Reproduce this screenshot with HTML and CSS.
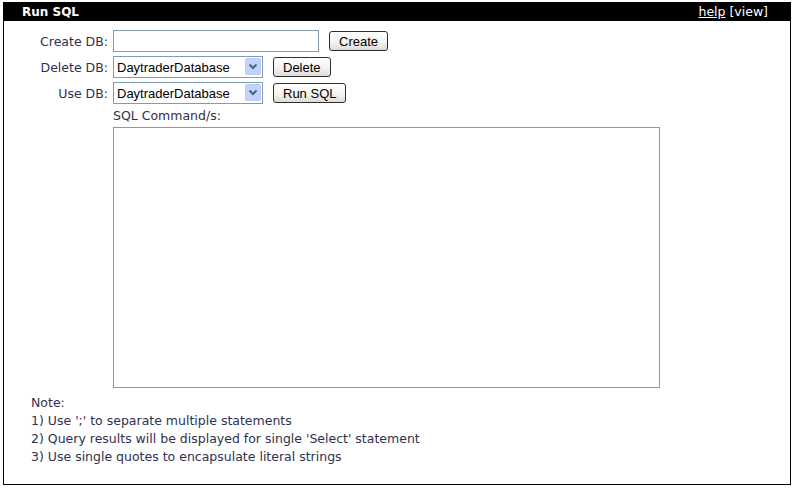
FILE: index.html
```html
<!DOCTYPE html>
<html>
<head>
<meta charset="utf-8">
<link rel="stylesheet" href="styles.css">
</head>
<body>
<div class="panel">
  <div class="titlebar">
    <span class="title">Run SQL</span>
    <span class="links"><a href="#" class="help">help</a> [view]</span>
  </div>
  <div class="content">
    <div class="form">
      <label class="lbl">Create DB:</label>
      <div class="row">
        <input type="text" class="txt">
        <button class="btn">Create</button>
      </div>
      <label class="lbl">Delete DB:</label>
      <div class="row">
        <span class="selwrap">
          <select class="sel"><option>DaytraderDatabase</option></select>
          <svg class="arrow" width="16" height="17" viewBox="0 0 16 17"><rect x="0.5" y="0.5" width="15" height="16" rx="1" fill="#c1d3fb" stroke="#b9cdf7"/><path d="M4.5 6.5 L8 10 L11.5 6.5" fill="none" stroke="#4d6185" stroke-width="2"/></svg>
        </span>
        <button class="btn">Delete</button>
      </div>
      <label class="lbl">Use DB:</label>
      <div class="row">
        <span class="selwrap">
          <select class="sel"><option>DaytraderDatabase</option></select>
          <svg class="arrow" width="16" height="17" viewBox="0 0 16 17"><rect x="0.5" y="0.5" width="15" height="16" rx="1" fill="#c1d3fb" stroke="#b9cdf7"/><path d="M4.5 6.5 L8 10 L11.5 6.5" fill="none" stroke="#4d6185" stroke-width="2"/></svg>
        </span>
        <button class="btn">Run SQL</button>
      </div>
      <span></span>
      <div class="cmd">
        <div class="cmdlbl">SQL Command/s:</div>
        <textarea class="area"></textarea>
      </div>
    </div>
    <div class="note">
      <div>Note:</div>
      <div>1) Use ';' to separate multiple statements</div>
      <div>2) Query results will be displayed for single 'Select' statement</div>
      <div>3) Use single quotes to encapsulate literal strings</div>
    </div>
  </div>
</div>
</body>
</html>
```

FILE: styles.css
```css
html, body {
  margin: 0;
  padding: 0;
  background: #fff;
}
body {
  font-family: "DejaVu Sans", Verdana, sans-serif;
  font-size: 11px;
  color: #30304f;
}
.panel {
  margin: 2px 2px 0 3px;
  width: 786px;
  height: 482px;
  border: 1px solid #000;
  border-top: none;
  display: flex;
  flex-direction: column;
}
.titlebar {
  background: #000;
  color: #fff;
  height: 19px;
  display: flex;
  align-items: center;
  justify-content: space-between;
  padding: 0 22px 0 18px;
  font-size: 12.5px;
}
.title {
  font-weight: bold;
  font-size: 12px;
}
.links {
  color: #fff;
}
.links a {
  color: #fff;
  text-decoration: underline;
}
.content {
  padding: 9px 0 0 26px;
}
.form {
  display: grid;
  grid-template-columns: 78px auto;
  column-gap: 5px;
  row-gap: 4px;
  align-items: center;
}
.lbl {
  text-align: right;
  font-size: 12.5px;
  white-space: nowrap;
}
.row {
  display: flex;
  align-items: center;
  gap: 10px;
}
.txt {
  box-sizing: border-box;
  width: 206px;
  height: 22px;
  border: 1px solid #7f9db9;
  margin: 0;
  padding: 2px;
  font-family: "Liberation Sans", Arial, sans-serif;
  font-size: 13px;
}
.btn {
  box-sizing: border-box;
  height: 20px;
  padding: 0 9px;
  margin: 0;
  border: 1px solid #2f2f2f;
  border-radius: 3px;
  background: linear-gradient(#ffffff, #f2f2ee 60%, #dcdcd6);
  font-family: "Liberation Sans", Arial, sans-serif;
  font-size: 13px;
  color: #000;
}
.selwrap {
  position: relative;
  display: inline-block;
  width: 150px;
  height: 22px;
}
.sel {
  appearance: none;
  -webkit-appearance: none;
  box-sizing: border-box;
  width: 150px;
  height: 22px;
  margin: 0;
  border: 1px solid #7f9db9;
  background: #fff;
  padding: 0 0 0 3px;
  font-family: "Liberation Sans", Arial, sans-serif;
  font-size: 13px;
  color: #000;
}
.arrow {
  position: absolute;
  right: 2px;
  top: 2px;
  pointer-events: none;
}
.cmd {
  display: flex;
  flex-direction: column;
  gap: 4px;
  margin-top: 0;
}
.cmdlbl {
  font-size: 12.5px;
}
.area {
  box-sizing: border-box;
  width: 547px;
  height: 261px;
  border: 1px solid #7f9db9;
  margin: 0;
  resize: none;
}
.note {
  margin: 6px 0 0 1px;
  font-size: 12.5px;
  line-height: 18px;
}
```
